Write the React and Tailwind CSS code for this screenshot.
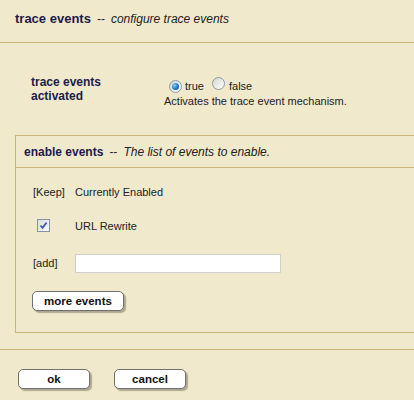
import React from "react";

function Radio({ checked }) {
  return (
    <span className="relative inline-flex h-[13px] w-[13px] items-center justify-center rounded-full border border-[#8d9aa8] bg-gradient-to-br from-[#d6d6d0] to-[#ffffff]">
      {checked && (
        <span className="h-[7px] w-[7px] rounded-full bg-[radial-gradient(circle_at_35%_35%,#8fd0ff_0%,#2a86d6_45%,#0b3f7a_100%)]" />
      )}
    </span>
  );
}

function Checkbox() {
  return (
    <span className="inline-flex h-[13px] w-[13px] items-center justify-center border border-[#8393ab] bg-gradient-to-br from-[#dcdcd8] to-[#fafafa]">
      <svg width="9" height="9" viewBox="0 0 9 9">
        <path d="M1.5 4.5 L3.5 6.8 L7.6 1.6" fill="none" stroke="#3a59b8" strokeWidth="1.7" />
      </svg>
    </span>
  );
}

function Btn({ children, w }) {
  return (
    <button
      className={`${w} h-[20px] rounded-[5px] border border-[#707070] bg-white text-[11.5px] font-bold leading-[18px] text-[#111] shadow-[2px_2px_1px_rgba(0,0,0,0.28)]`}
    >
      {children}
    </button>
  );
}

export default function App() {
  return (
    <div className="h-[400px] w-[414px] overflow-hidden bg-[#f1e9cb] font-['Liberation_Sans',Arial,sans-serif] text-[#222]">
      {/* Header */}
      <div className="h-[43px] border-b border-[#c9b577] pl-[15px] pt-[10px] leading-[16px]">
        <span className="text-[13px] font-bold text-[#1c1c4c]">trace events</span>
        <span className="ml-[6px] text-[12px] text-[#1c1c4c]">--</span>
        <span className="ml-[6px] text-[12px] italic text-[#222]">configure trace events</span>
      </div>

      {/* Form row */}
      <div className="flex items-start pl-[31px] pt-[32px]">
        <div className="w-[133px] text-[12px] font-bold leading-[14px] text-[#1c1c4c]">
          trace events
          <br />
          activated
        </div>
        <div className="flex flex-col pt-[3px]">
          <div className="flex h-[16px] items-center text-[11px]">
            <span className="ml-[5px]"><Radio checked /></span>
            <span className="ml-[3px]">true</span>
            <span className="ml-[8px]"><Radio /></span>
            <span className="ml-[4px]">false</span>
          </div>
          <div className="text-[11px] leading-[14px]">Activates the trace event mechanism.</div>
        </div>
      </div>

      {/* Panel */}
      <div className="ml-[15px] mr-[-20px] mt-[27px] border-y border-l border-[#c9b577]">
        <div className="flex h-[32px] items-center border-b border-[#c9b577] pl-[8px] leading-[14px]">
          <span className="text-[12px] font-bold text-[#1c1c4c]">enable events</span>
          <span className="ml-[6px] text-[12px] text-[#1c1c4c]">--</span>
          <span className="ml-[6px] text-[12px] italic text-[#222]">The list of events to enable.</span>
        </div>
        <div className="flex flex-col pb-[19px] pl-[17px] pt-[14px] text-[11px]">
          <div className="flex h-[20px] items-center">
            <span className="w-[42px]">[Keep]</span>
            <span>Currently Enabled</span>
          </div>
          <div className="mt-[14px] flex h-[20px] items-center">
            <span className="w-[42px] pl-[4px]"><Checkbox /></span>
            <span>URL Rewrite</span>
          </div>
          <div className="mt-[18px] flex h-[19px] items-center">
            <span className="w-[42px]">[add]</span>
            <input className="h-[19px] w-[206px] border border-[#cfcfcf] bg-white outline-none" />
          </div>
          <div className="mt-[18px] flex h-[22px] items-start pl-[-1px]">
            <span className="-ml-[1px]"><Btn w="w-[92px]">more events</Btn></span>
          </div>
        </div>
      </div>

      {/* Footer */}
      <div className="mt-[16px] border-t border-[#c9b577] pl-[18px] pt-[19px]">
        <div className="flex gap-[24px]">
          <Btn w="w-[72px]">ok</Btn>
          <Btn w="w-[72px]">cancel</Btn>
        </div>
      </div>
    </div>
  );
}
